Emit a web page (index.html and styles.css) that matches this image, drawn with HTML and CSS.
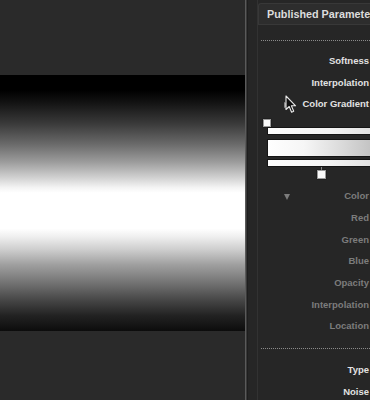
FILE: index.html
```html
<!DOCTYPE html>
<html>
<head>
<meta charset="utf-8">
<link rel="stylesheet" href="styles.css">
</head>
<body>
<div class="app">
  <div class="viewer">
    <div class="image"></div>
  </div>
  <div class="divider"></div>
  <div class="inspector">
    <div class="box">
      <div class="header">Published Parameters</div>
      <div class="sep first"></div>
      <div class="rows">
        <div class="row">Softness</div>
        <div class="row">Interpolation</div>
        <div class="row disclose">
          <span class="tri right"></span>
          <span>Color Gradient</span>
          <svg class="cursor" width="12" height="19" viewBox="0 0 12 19">
            <path d="M1 1 L1 14.5 L4.2 11.5 L6.6 17.2 L8.7 16.3 L6.4 10.8 L10.6 10.8 Z" fill="#111" stroke="#e8e8e8" stroke-width="1.1" stroke-linejoin="round"/>
          </svg>
        </div>
      </div>
      <div class="editor">
        <div class="handle top"></div>
        <div class="bar thin"></div>
        <div class="bar wide"></div>
        <div class="bar thin"></div>
        <div class="stem"></div>
        <div class="handle bottom"></div>
      </div>
      <div class="rows sub">
        <div class="row disclose"><span class="tri down"></span><span>Color</span></div>
        <div class="row">Red</div>
        <div class="row">Green</div>
        <div class="row">Blue</div>
        <div class="row">Opacity</div>
        <div class="row">Interpolation</div>
        <div class="row">Location</div>
      </div>
      <div class="sep second"></div>
      <div class="rows last">
        <div class="row">Type</div>
        <div class="row">Noise</div>
      </div>
    </div>
  </div>
</div>
</body>
</html>
```

FILE: styles.css
```css
html, body {
  margin: 0;
  padding: 0;
  width: 370px;
  height: 400px;
  overflow: hidden;
  background: #2a2a2a;
}

.app {
  display: flex;
  height: 400px;
  font-family: "Liberation Sans", Arial, sans-serif;
}

.viewer {
  width: 245px;
  flex: none;
  padding-top: 75px;
  background: #2a2a2a;
}

.image {
  height: 256px;
  background: linear-gradient(to bottom,
    #000 0%, #000 6%, #141414 11%, #3a3a3a 19%, #6a6a6a 27%,
    #9c9c9c 34%, #d0d0d0 40%, #f4f4f4 44%, #fff 46%, #fff 60%,
    #f0f0f0 63%, #cfcfcf 68%, #a0a0a0 74%, #747474 81%,
    #464646 88%, #222 94%, #0c0c0c 100%);
}

.divider {
  width: 3px;
  flex: none;
  background: linear-gradient(to right, #5a5a5a 0, #5a5a5a 1px, #3a3a3a 1px, #3a3a3a 2px, #1e1e1e 2px);
}

.inspector {
  flex: 1;
  background: #262626;
  padding-left: 9px;
  overflow: hidden;
}

.box {
  height: 100%;
  padding-top: 3px;
  box-sizing: border-box;
  border-left: 1px solid #323232;
  background: #262626;
}

.header {
  height: 22px;
  box-sizing: border-box;
  border: 1px solid #383838;
  border-right: none;
  border-radius: 3px 0 0 0;
  background: #2d2d2d;
  color: #dcdcdc;
  font-weight: bold;
  font-size: 10.8px;
  line-height: 21px;
  padding-left: 8px;
  white-space: nowrap;
  overflow: hidden;
}

.sep {
  height: 0;
  border-top: 1px dotted #8a8a8a;
  margin-left: 3px;
}

.sep.first {
  margin-top: 15px;
}

.sep.second {
  margin-top: 12px;
}

.rows {
  padding-top: 8px;
}

.rows.sub {
  padding-top: 0;
}

.rows.last {
  padding-top: 9px;
}

.row {
  height: 21.67px;
  box-sizing: border-box;
  padding-top: 3px;
  line-height: 18.67px;
  text-align: right;
  padding-right: 1px;
  font-size: 9.5px;
  font-weight: bold;
  color: #e2e2e2;
  white-space: nowrap;
}

.sub .row {
  color: #7c7c7c;
}

.disclose {
  position: relative;
  display: flex;
  justify-content: space-between;
  align-items: center;
  padding-left: 26px;
}

.tri {
  width: 0;
  height: 0;
}

.tri.right {
  border-top: 3.5px solid transparent;
  border-bottom: 3.5px solid transparent;
  border-left: 6px solid #8a8a8a;
}

.tri.down {
  border-left: 3.5px solid transparent;
  border-right: 3.5px solid transparent;
  border-top: 6px solid #7c7c7c;
}

.cursor {
  position: absolute;
  left: 27px;
  top: 3px;
}

.editor {
  height: 70.5px;
  box-sizing: border-box;
  padding-top: 5.5px;
  padding-left: 9px;
  display: flex;
  flex-direction: column;
}

.handle {
  width: 8px;
  height: 8px;
  box-sizing: border-box;
  border: 1.5px solid #9a9a9a;
  background: #fafafa;
  box-shadow: 0 0 1px #000;
  flex: none;
}

.handle.top {
  margin-left: -4px;
}

.stem {
  width: 1px;
  height: 3px;
  margin-left: 54px;
  background: #8a8a8a;
  flex: none;
}

.handle.bottom {
  width: 9px;
  height: 9px;
  margin-left: 50px;
}

.bar {
  flex: none;
  border: 1px solid #151515;
  border-right: none;
  box-sizing: border-box;
}

.bar.thin {
  height: 8px;
  background: linear-gradient(to right, #fdfdfd 0%, #f4f4f4 60%, #e2e2e2 100%);
}

.bar.thin:first-of-type {
  margin-top: 3px;
}

.bar.wide {
  height: 18px;
  margin-top: 4px;
  margin-bottom: 1.5px;
  background: linear-gradient(to right, #fefefe 0%, #f6f6f6 35%, #dcdcdc 70%, #c4c4c4 100%);
}
```
